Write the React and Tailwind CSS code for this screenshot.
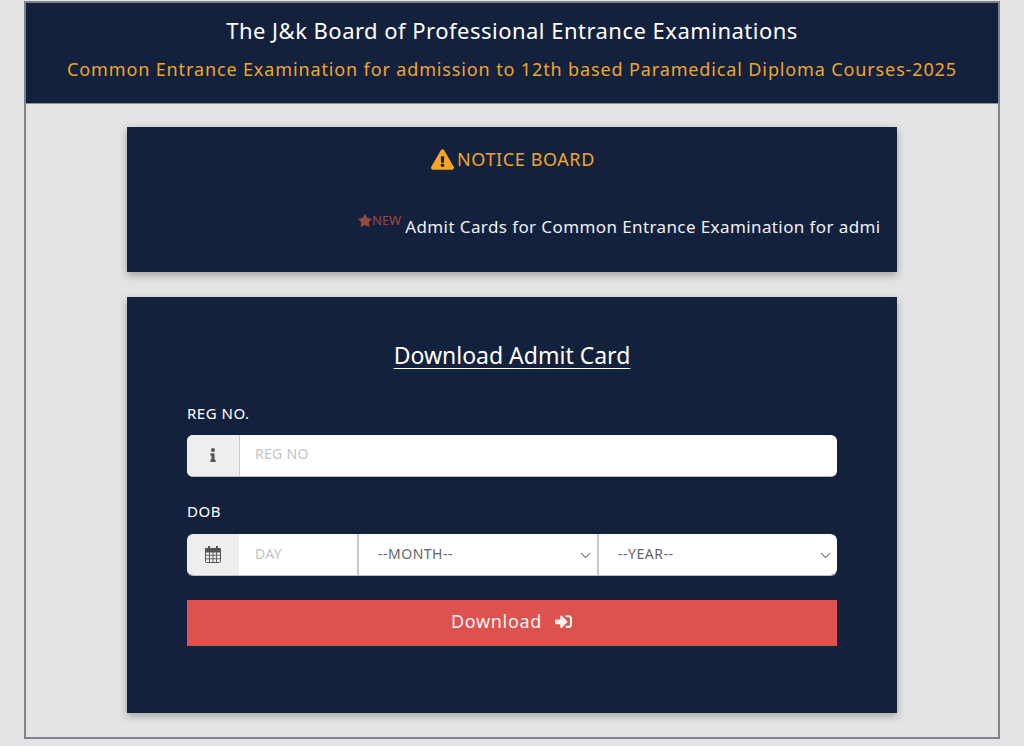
import React from 'react';
import { FaExclamationTriangle, FaStar, FaInfo, FaSignInAlt } from 'react-icons/fa';
import { ChevronDown } from 'lucide-react';

function CalendarIcon() {
  return (
    <svg viewBox="0 0 16 17" className="w-[16px] h-[17px]" fill="none" stroke="currentColor">
      <rect x="0.5" y="2.5" width="15" height="14" rx="1" />
      <path d="M0.5 2.5h15v3.5h-15z" fill="currentColor" />
      <path d="M4.5 6v10M8 6v10M11.5 6v10M0.5 9.3h15M0.5 12.8h15" strokeWidth="0.9" />
      <path d="M4 0.5v3M12 0.5v3" strokeWidth="2" strokeLinecap="round" />
    </svg>
  );
}

function DateSelect({ label }) {
  return (
    <div className="relative flex-1 h-full border-l-2 border-[#c9c9c9] bg-white last:rounded-r-md">
      <select className="w-full h-full appearance-none bg-transparent pl-[19px] pb-[2px] text-[14px] tracking-[0.5px] text-[#666666] outline-none">
        <option>{label}</option>
      </select>
      <ChevronDown className="absolute right-[3px] top-[13px] w-[17px] h-[17px] text-[#777777] pointer-events-none" strokeWidth={1.5} />
    </div>
  );
}

export default function App() {
  return (
    <div className="h-[746px] overflow-hidden bg-[#e4e4e4] px-6 pt-px font-['Noto_Sans',sans-serif]">
      <div className="h-[738px] w-[976px] border-2 border-[#7d8190] bg-[#e4e4e4]">
        {/* Header */}
        <div className="h-[101px] bg-[#14213d] border-b border-[#8f93a3] text-center pt-[12px]">
          <h1 className="text-[22px] leading-[30px] text-white tracking-[0.48px]">The J&amp;k Board of Professional Entrance Examinations</h1>
          <h2 className="mt-[9px] text-[18px] leading-[30px] text-[#eea62c] tracking-[0.87px]">Common Entrance Examination for admission to 12th based Paramedical Diploma Courses-2025</h2>
        </div>

        <div className="mx-auto w-[770px] pt-[23px]">
          {/* Notice board */}
          <div className="h-[145px] bg-[#14213d] shadow-[0_3px_8px_rgba(0,0,0,0.3)] pt-[18px]">
            <div className="flex items-center justify-center gap-[3px] h-[28px] pl-[2px] text-[18px] tracking-[0.6px] text-[#eea62c]">
              <FaExclamationTriangle className="w-[23px] h-[21px] text-[#f5a623]" />
              <span>NOTICE BOARD</span>
            </div>
            <div className="mt-[40px] ml-[231px] mr-[17px] overflow-hidden whitespace-nowrap flex items-start">
              <FaStar className="mt-[1px] shrink-0 w-[14px] h-[13px] text-[#96493f]" />
              <span className="shrink-0 text-[13px] leading-[14px] text-[#96493f]">NEW</span>
              <span className="shrink-0 ml-[4px] mt-[2px] text-[17px] leading-[24px] text-[#eef0f4] tracking-[0.4px]">Admit Cards for Common Entrance Examination for admission to 12th based Paramedical Diploma Courses-2025</span>
            </div>
          </div>

          {/* Download form */}
          <div className="mt-[25px] h-[416px] bg-[#14213d] shadow-[0_3px_8px_rgba(0,0,0,0.3)] px-[60px] pt-[41px]">
            <h3 className="text-center text-[23px] leading-[34px] text-white underline underline-offset-[4px] decoration-1">Download Admit Card</h3>

            <label className="block mt-[31px] text-[15px] leading-[20px] text-white tracking-[0.5px]">REG NO.</label>
            <div className="mt-[12px] flex h-[42px] rounded-md bg-white overflow-hidden border-b border-[#b9bcc4]">
              <div className="flex items-center justify-center w-[53px] bg-[#eeeeee] border-r border-[#c9c9c9] text-[#555555]">
                <FaInfo className="w-[14px] h-[14px] -mt-[2px]" />
              </div>
              <input placeholder="REG NO" className="flex-1 pl-[15px] pb-[5px] text-[14px] tracking-[0.3px] text-[#555555] outline-none placeholder:text-[#c4c4c4]" />
            </div>

            <label className="block mt-[24px] text-[15px] leading-[20px] text-white tracking-[0.5px]">DOB</label>
            <div className="mt-[13px] flex h-[42px] rounded-md overflow-hidden border-b border-[#b9bcc4]">
              <div className="flex items-center justify-center w-[52px] shrink-0 bg-[#eeeeee] text-[#555555]">
                <CalendarIcon />
              </div>
              <input placeholder="DAY" className="w-[118px] shrink-0 min-w-0 bg-white pl-[16px] pb-[3px] text-[14px] tracking-[0.3px] text-[#555555] outline-none placeholder:text-[#c4c4c4]" />
              <DateSelect label="--MONTH--" />
              <DateSelect label="--YEAR--" />
            </div>

            <button className="mt-[24px] flex items-center justify-center gap-[12px] w-full h-[46px] pb-[4px] bg-[#dc524f] text-[18px] text-[#fdf3f2] tracking-[0.7px]">
              Download
              <FaSignInAlt className="w-[19px] h-[17px]" />
            </button>
          </div>
        </div>
      </div>
    </div>
  );
}
